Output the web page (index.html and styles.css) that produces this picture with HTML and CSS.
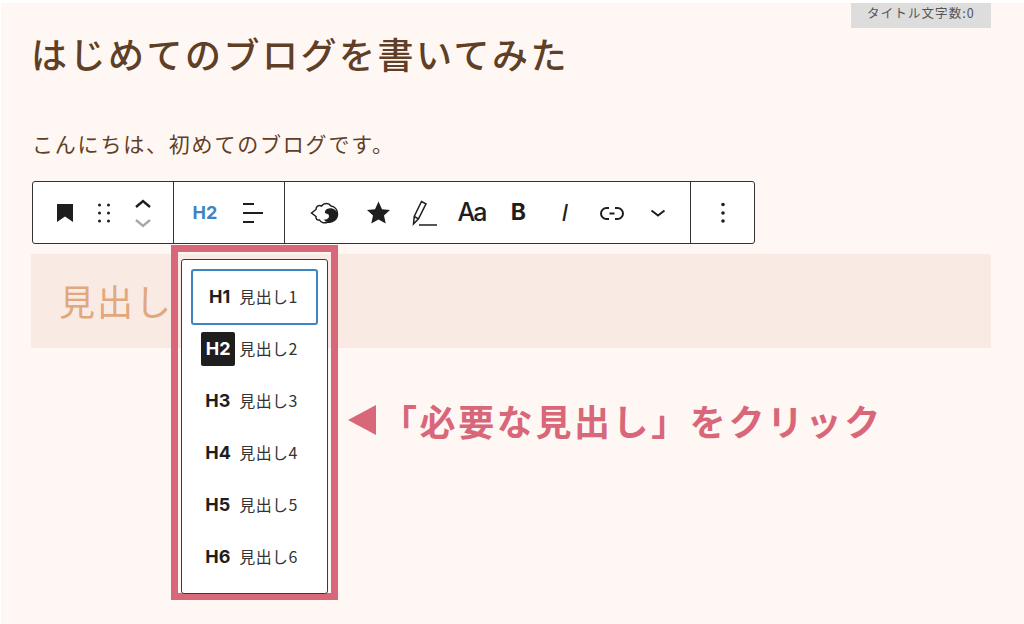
FILE: index.html
```html
<!DOCTYPE html>
<html lang="ja">
<head>
<meta charset="utf-8">
<title>見出しの選択</title>
<link rel="stylesheet" href="styles.css">
</head>
<body>
<main class="editor">
  <div class="count-row"><div class="count">タイトル文字数:0</div></div>
  <h1 class="title">はじめてのブログを書いてみた</h1>
  <p class="para">こんにちは、初めてのブログです。</p>
  <div class="toolbar">
    <div class="group g1">
      <svg class="ic" viewBox="0 0 24 24"><path d="M4 3h16v18l-8-5.500L4 21z"/></svg>
      <svg class="ic" viewBox="0 0 24 24"><circle cx="7.500" cy="4" r="1.500"/><circle cx="16.500" cy="4" r="1.500"/><circle cx="7.500" cy="12" r="1.500"/><circle cx="16.500" cy="12" r="1.500"/><circle cx="7.500" cy="20" r="1.500"/><circle cx="16.500" cy="20" r="1.500"/></svg>
      <svg class="ic tall" viewBox="0 0 24 32"><path class="ln" d="M5 10l7-6 7 6"/><path class="ln grey" d="M5 23l7 6 7-6"/></svg>
    </div>
    <div class="group g2">
      <span class="h2">H2</span>
      <svg class="ic" viewBox="0 0 24 24"><path class="ln mid" d="M2 3h11M2 12h20M2 21h11"/></svg>
    </div>
    <div class="group g3">
      <svg class="cell" viewBox="0 0 30 30"><path class="ln thin" d="M2.500 15L7 11.500C7 8 10 6.500 12.500 8 15 4.500 20 5 22 8c4 .5 6.500 4 6.500 8 0 5-4.500 9-9.500 8-3 1.500-7 1-8.500-2-2.500.5-4-1.500-3.500-3.500z"/><path d="M18 11c5-2 10 1 10.500 5 0 5-4.500 9-9.500 8-2 0-3.500-1-4-2.500 4 .5 6-2.500 4.500-5L16 15c-.5-2 .5-3 2-4z"/></svg>
      <svg class="cell star" viewBox="0 0 30 30"><path d="M15.500 3.500l3.500 7.800 8 .8-6 5.500 1.700 8-7.200-4.100-7.200 4.100 1.700-8-6-5.500 8-.8z"/></svg>
      <svg class="cell" viewBox="0 0 30 30"><path class="ln thin" d="M3.500 26l.7-7.500L11.500 3.500l4.500 2.300-7.500 15zM4.200 18.500l4.300 2.300"/><path class="ln thin" d="M9 27h18"/></svg>
      <span class="cell aa">Aa</span>
      <span class="cell b">B</span>
      <span class="cell i">I</span>
      <svg class="cell" viewBox="0 0 30 30"><path class="ln two" d="M12 10H9.500a5.500 5.500 0 0 0 0 11H12M18 10h2.500a5.500 5.500 0 0 1 0 11H18M12.500 15.500h5"/></svg>
      <svg class="cell" viewBox="0 0 30 30"><path class="ln two" d="M8.500 12.500l6.500 5 6.500-5"/></svg>
    </div>
    <div class="group g4">
      <svg class="ic" viewBox="0 0 24 24"><circle cx="12" cy="3.500" r="1.800"/><circle cx="12" cy="12" r="1.800"/><circle cx="12" cy="20" r="1.800"/></svg>
    </div>
  </div>
  <h2 class="band">見出し</h2>

  <div class="frame">
    <ul class="menu">
      <li class="item active"><b>H1</b><span>見出し1</span></li>
      <li class="item"><b class="dark">H2</b><span>見出し2</span></li>
      <li class="item"><b>H3</b><span>見出し3</span></li>
      <li class="item"><b>H4</b><span>見出し4</span></li>
      <li class="item"><b>H5</b><span>見出し5</span></li>
      <li class="item"><b>H6</b><span>見出し6</span></li>
    </ul>
  </div>
  <div class="note"><i class="arrow"></i><span>「必要な見出し」をクリック</span></div>
</main>
</body>
</html>
```
FILE: styles.css
```css
* { box-sizing: border-box; }
html, body { margin: 0; height: 100%; background: #fff; overflow: hidden; }
body { padding: 3px 0 0 1px; }
.editor {
  position: relative;
  height: 621px;
  background: #fff7f4;
  font-family: "Noto Sans CJK JP", "Noto Sans", sans-serif;
  color: #5f3f26;
  padding-left: 30px;
}
.count-row { display: flex; justify-content: flex-end; padding-right: 33px; }
.count {
  width: 140px; height: 25px;
  background: #dddddd;
  color: #555;
  font-size: 12.500px;
  letter-spacing: 1.100px;
  text-align: center;
  line-height: 19px;
}
.title {
  margin: 0;
  font-size: 36px;
  line-height: 50px;
  font-weight: 500;
  letter-spacing: 2.500px;
}
.para {
  margin: 49px 0 0;
  padding-left: 1px;
  font-size: 21px;
  line-height: 32px;
  letter-spacing: 1.800px;
}
.toolbar {
  display: flex;
  width: 723px;
  height: 63px;
  margin: 22px 0 0 1px;
  background: #fff;
  border: 1px solid #333;
  border-radius: 3px;
  color: #1e1e1e;
}
.group { display: flex; align-items: center; border-right: 1px solid #333; flex: none; }
.group:last-child { border-right: 0; }
.g1 { width: 141px; padding-left: 19.500px; gap: 15px; }
.g2 { width: 111px; padding-left: 15px; gap: 20px; }
.g3 { width: 406px; padding-left: 24px; gap: 16.700px; }
.g4 { flex: 1; justify-content: center; }
.ic { width: 24px; height: 24px; flex: none; fill: #1e1e1e; }
.tall { height: 32px; }
.cell {
  width: 30px; height: 30px;
  flex: none;
  fill: #1e1e1e;
  display: flex;
  align-items: center;
  justify-content: center;
}
.star { margin-left: 7.500px; }
.ln { fill: none; stroke: #1e1e1e; stroke-width: 2.400; }
.ln.thin { stroke-width: 1.500; }
.ln.mid { stroke-width: 2; }
.ln.two { stroke-width: 2; }
.ln.grey { stroke: #a9a9a9; }
.h2 { width: 32px; text-align: center; color: #3d85c0; font: 700 18px/1 Inter, sans-serif; }
.aa { font: 500 25px/1 Inter, sans-serif; letter-spacing: -2px; }
.b { font: 700 23px/1 Inter, sans-serif; }
.i { font: italic 400 24px/1 "Liberation Sans", sans-serif; }
.band {
  margin: 10px 0 0;
  width: 960px;
  height: 94px;
  background: #f9ebe4;
  color: #e0a87c;
  font-size: 36px;
  font-weight: 400;
  line-height: 92px;
  padding-left: 28px;
  letter-spacing: 2px;
}
.frame {
  position: absolute;
  left: 170px; top: 242px;
  width: 167px; height: 355px;
  border: 7px solid #d8677a;
  padding: 7px 3px 0;
}
.menu {
  list-style: none;
  margin: 0;
  height: 335px;
  width: 147px;
  background: #fff;
  border: 1px solid #3b3b3b;
  border-radius: 3px;
  padding: 9px 9px 0;
  color: #1e1e1e;
}
.item {
  height: 52px;
  display: flex;
  align-items: center;
  justify-content: center;
  gap: 9px;
  padding-right: 6px;
  font-size: 16px;
}
.item b { font: 700 18px/1 Inter, sans-serif; width: 25px; text-align: right; flex: none; white-space: nowrap; }
.item span { color: #333; position: relative; top: -1px; letter-spacing: .4px; }
.item.active { height: 56px; margin-bottom: -2px; border: 2px solid #3d85c0; border-radius: 3px; }
.item .dark {
  background: #1e1e1e; color: #fff;
  width: 34px; height: 34px; line-height: 34px;
  border-radius: 2px;
  text-align: center;
  margin-left: -4px; margin-right: -5px;
}
.note {
  position: absolute;
  left: 347px; top: 393px;
  display: flex;
  align-items: center;
  color: #d8677a;
  font-size: 36px;
  font-weight: 700;
  line-height: 48px;
  letter-spacing: 2.600px;
}
.arrow {
  width: 0; height: 0;
  border-style: solid;
  border-width: 15px 28px 15px 0;
  border-color: transparent #d8677a transparent transparent;
  margin-right: 5px;
}
```
